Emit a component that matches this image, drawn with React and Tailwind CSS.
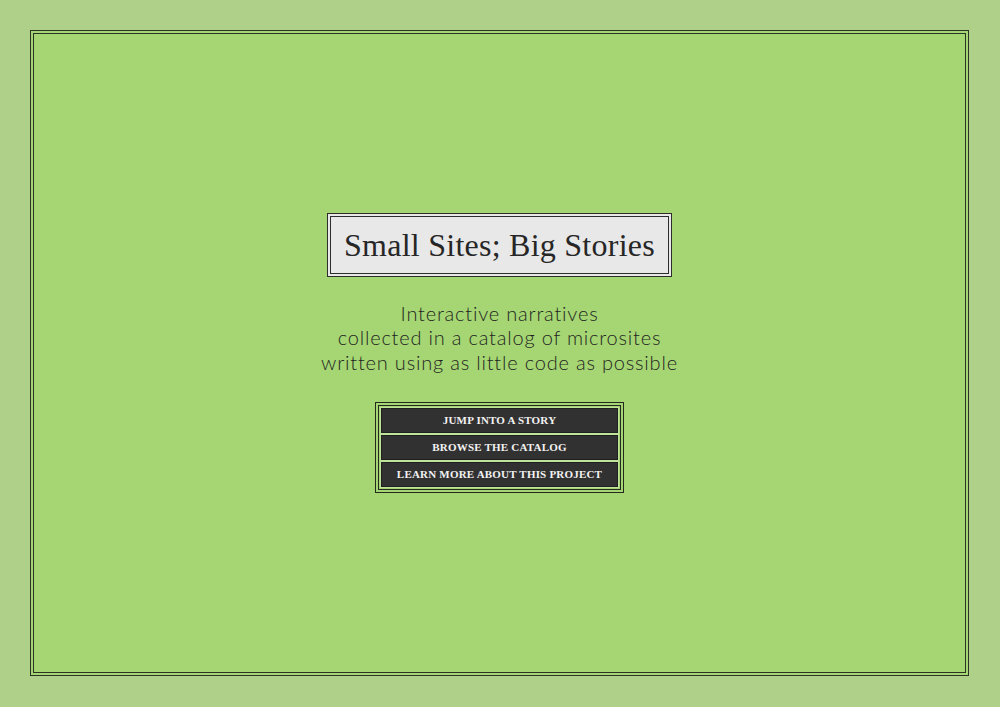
const LINKS = ['Jump into a story', 'Browse the catalog', 'Learn more about this project']

export default function App() {
  return (
    <div className="h-[707px] w-full bg-[#afd089] p-[30px] pr-[31px]">
      {/* page frame */}
      <div className="h-[646px] border-4 border-double border-[#2a3324] bg-[#a5d673] flex flex-col items-center justify-center">
        {/* title */}
        <div className="border-4 border-double border-[#2d2d2d] bg-[#e8e8e8] px-[13px] h-[64px] flex items-center">
          <h1 className="font-['Liberation_Serif',serif] text-[32px] text-[#262626] tracking-[0.25px] leading-none">
            Small Sites; Big Stories
          </h1>
        </div>

        {/* tagline */}
        <p className="mt-[24px] text-center font-['Lato',sans-serif] font-light text-[20px] leading-[24.5px] tracking-[0.8px] text-[#1f1f1f]">
          Interactive narratives
          <br />
          collected in a catalog of microsites
          <br />
          written using as little code as possible
        </p>

        {/* nav */}
        <nav className="mt-[28px] border-4 border-double border-[#23291e] p-[2px] flex flex-col gap-[2px]">
          {LINKS.map((label) => (
            <a
              key={label}
              href="#"
              className="w-[237px] h-[25px] pb-px flex items-center justify-center bg-[#323132] border border-[#1f1f1f] outline outline-1 outline-[#bfe39a] font-['Liberation_Serif',serif] font-bold uppercase text-[11px] text-[#f2f2f2] tracking-[0.2px]"
            >
              {label}
            </a>
          ))}
        </nav>
      </div>
    </div>
  )
}
